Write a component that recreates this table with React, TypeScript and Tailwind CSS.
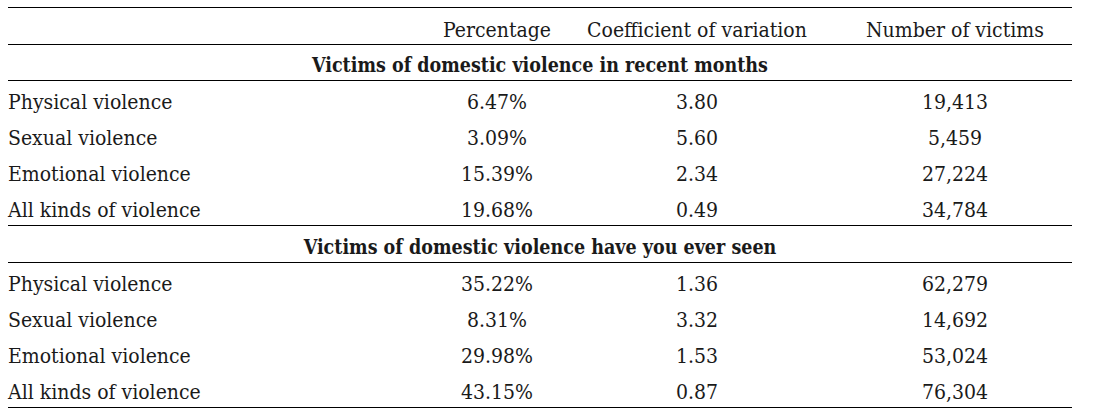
const sections = [
  {
    title: "Victims of domestic violence in recent months",
    rows: [
      ["Physical violence", "6.47%", "3.80", "19,413"],
      ["Sexual violence", "3.09%", "5.60", "5,459"],
      ["Emotional violence", "15.39%", "2.34", "27,224"],
      ["All kinds of violence", "19.68%", "0.49", "34,784"],
    ],
  },
  {
    title: "Victims of domestic violence have you ever seen",
    rows: [
      ["Physical violence", "35.22%", "1.36", "62,279"],
      ["Sexual violence", "8.31%", "3.32", "14,692"],
      ["Emotional violence", "29.98%", "1.53", "53,024"],
      ["All kinds of violence", "43.15%", "0.87", "76,304"],
    ],
  },
];

const cols = "grid grid-cols-[430px_118px_282px_234px]";

export default function App() {
  return (
    <div className="min-h-screen bg-white pt-[7px] pl-[8px] font-['DejaVu_Serif',serif] font-stretch-condensed text-[#1a1a1a]">
      <div className="w-[1064px] border-t border-b border-black">
        <div className={`${cols} h-[37px] items-end border-b border-black pb-[3px] text-[21px] leading-none`}>
          <div />
          <div className="text-center">Percentage</div>
          <div className="text-center whitespace-nowrap">Coefficient of variation</div>
          <div className="text-center">Number of victims</div>
        </div>

        {sections.map((section, i) => (
          <div key={section.title} className={i > 0 ? "border-t border-black" : ""}>
            <div
              className={`flex ${i > 0 ? "h-[37px]" : "h-[36px]"} items-end justify-center border-b border-black pb-[5px] text-[19.5px] font-bold leading-none`}
            >
              {section.title}
            </div>
            {section.rows.map((row) => (
              <div key={row[0]} className={`${cols} h-[36px] items-end pb-[4px] text-[21px] leading-none`}>
                <div>{row[0]}</div>
                <div className="text-center">{row[1]}</div>
                <div className="text-center">{row[2]}</div>
                <div className="text-center">{row[3]}</div>
              </div>
            ))}
          </div>
        ))}
      </div>
    </div>
  );
}
